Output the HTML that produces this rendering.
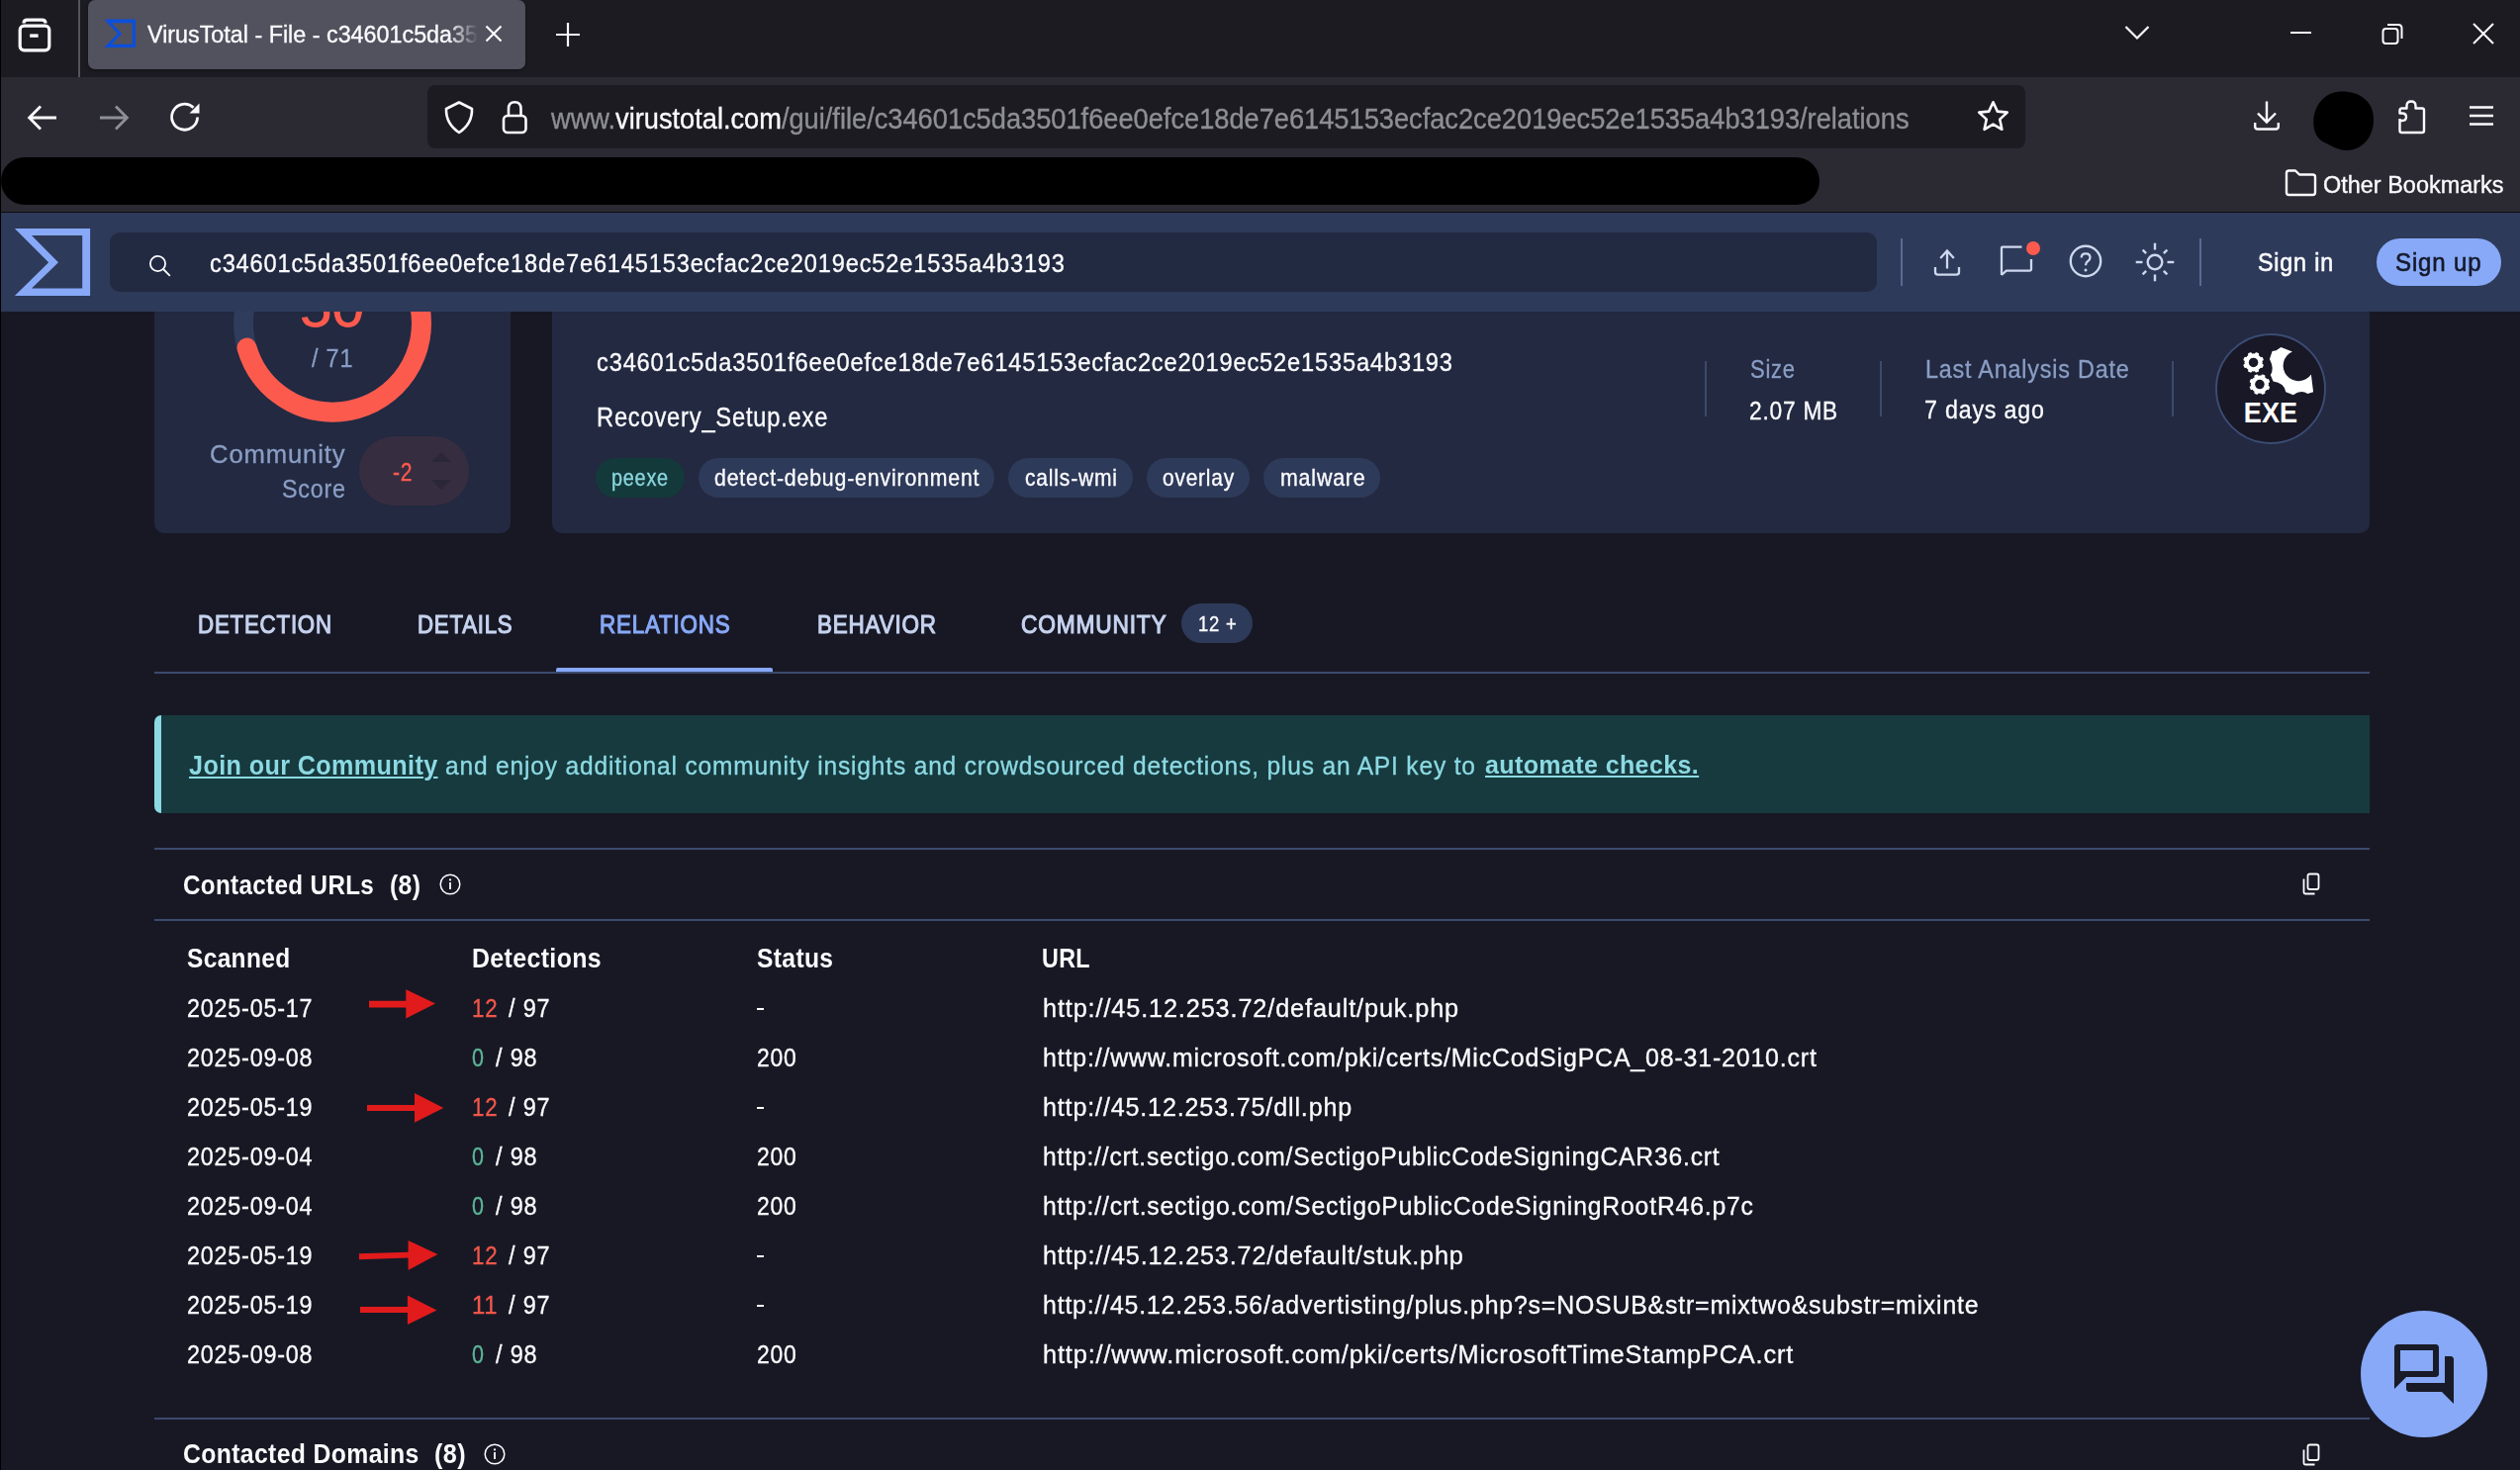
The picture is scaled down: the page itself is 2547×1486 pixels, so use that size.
<!DOCTYPE html>
<html><head><meta charset="utf-8"><title>VirusTotal</title>
<style>
html,body{margin:0;padding:0;width:2547px;height:1486px;overflow:hidden;background:#181825;}
body{position:relative;font-family:"Liberation Sans",sans-serif;}
.t{position:absolute;white-space:pre;transform-origin:0 0;color:#fff;-webkit-text-stroke-color:currentColor;}
.r{position:absolute;display:block;}
</style></head><body>
<div class="r" style="left:0.00px;top:0.00px;width:2547.00px;height:78.00px;background:#1c1b22;border-radius:0px;"></div>
<div class="r" style="left:0.00px;top:78.00px;width:2547.00px;height:136.00px;background:#2b2a33;border-radius:0px;"></div>
<div class="r" style="left:0.00px;top:214.00px;width:2547.00px;height:1.00px;background:#0c0c0e;border-radius:0px;"></div>
<div class="r" style="left:0.00px;top:0.00px;width:1.00px;height:1486.00px;background:#000;border-radius:0px;"></div>
<svg class="r" style="left:17.00px;top:17.00px;" width="36" height="36" viewBox="0 0 36 36"><rect x="3.2" y="9.2" width="29.6" height="24.6" rx="4" fill="none" stroke="#fbfbfe" stroke-width="3.2"/><path d="M7 6.5 Q7 3.2 10.5 3.2 H25.5 Q29 3.2 29 6.5" fill="none" stroke="#fbfbfe" stroke-width="3.2"/><rect x="13.2" y="17.4" width="8.4" height="3.4" fill="#fbfbfe"/></svg>
<div class="r" style="left:79.00px;top:0.00px;width:2.00px;height:78.00px;background:#55545e;border-radius:0px;"></div>
<div class="r" style="left:89.00px;top:0.00px;width:442.00px;height:70.00px;background:#52515e;border-radius:7px;box-shadow:0 1px 3px rgba(0,0,0,0.45)"></div>
<svg class="r" style="left:0.00px;top:0.00px;" width="150" height="60" viewBox="0 0 150 60"><path d="M105.3 19.6 H137 V48.05 H105.3 L119 34 Z M112.8 23.2 H133.7 V44.65 H112.8 L123.1 34 Z" fill="#0b4fdc" fill-rule="evenodd"/></svg>
<svg class="r" style="left:489.00px;top:24.00px;" width="20" height="20" viewBox="0 0 20 20"><path d="M2.5 2.5 L17.5 17.5 M17.5 2.5 L2.5 17.5" stroke="#fbfbfe" stroke-width="2.2"/></svg>
<svg class="r" style="left:560.00px;top:21.00px;" width="28" height="28" viewBox="0 0 28 28"><path d="M14 2 V26 M2 14 H26" stroke="#fbfbfe" stroke-width="2.2"/></svg>
<svg class="r" style="left:2146.00px;top:24.00px;" width="28" height="19" viewBox="0 0 28 19"><path d="M2.5 3 L14 14.5 L25.5 3" fill="none" stroke="#fbfbfe" stroke-width="2.2"/></svg>
<div class="r" style="left:2315.00px;top:32.00px;width:21.00px;height:2.00px;background:#fbfbfe;border-radius:0px;"></div>
<svg class="r" style="left:2405.00px;top:21.00px;" width="26" height="26" viewBox="0 0 26 26"><rect x="3.5" y="8" width="15" height="15" rx="3" fill="none" stroke="#fbfbfe" stroke-width="2"/><path d="M8 4 H19 Q22.5 4 22.5 7.5 V18" fill="none" stroke="#fbfbfe" stroke-width="2"/></svg>
<svg class="r" style="left:2498.00px;top:22.00px;" width="24" height="24" viewBox="0 0 24 24"><path d="M2 2 L22 22 M22 2 L2 22" stroke="#fbfbfe" stroke-width="2"/></svg>
<svg class="r" style="left:26.00px;top:104.00px;" width="34" height="30" viewBox="0 0 34 30"><path d="M31 15 H4 M15 3.5 L3.6 15 L15 26.5" fill="none" stroke="#fbfbfe" stroke-width="2.8"/></svg>
<svg class="r" style="left:98.00px;top:104.00px;" width="34" height="30" viewBox="0 0 34 30"><path d="M3 15 H30 M19 3.5 L30.4 15 L19 26.5" fill="none" stroke="#8f8f98" stroke-width="2.8"/></svg>
<svg class="r" style="left:170.00px;top:101.00px;" width="34" height="34" viewBox="0 0 34 34"><path d="M29.6 17.5 A13 13 0 1 1 25.5 7.7" fill="none" stroke="#fbfbfe" stroke-width="2.8"/><path d="M31.5 3.5 V13.5 H21.5 Z" fill="#fbfbfe"/></svg>
<div class="r" style="left:432.00px;top:86.00px;width:1615.00px;height:64.00px;background:#1c1b22;border-radius:8px;"></div>
<svg class="r" style="left:446.00px;top:100.00px;" width="36" height="37" viewBox="0 0 36 37"><path d="M18 3.5 L31 10 Q31.5 25 18 34 Q4.5 25 5 10 Z" fill="none" stroke="#fbfbfe" stroke-width="2.6" stroke-linejoin="round"/></svg>
<svg class="r" style="left:505.00px;top:100.00px;" width="30" height="37" viewBox="0 0 30 37"><rect x="4" y="17" width="22.5" height="17" rx="4" fill="none" stroke="#fbfbfe" stroke-width="2.6"/><path d="M9 17 V10 Q9 3.3 15.25 3.3 Q21.5 3.3 21.5 10 V17" fill="none" stroke="#fbfbfe" stroke-width="2.6"/></svg>
<svg class="r" style="left:1996.00px;top:100.00px;" width="37" height="36" viewBox="0 0 37 36"><path d="M18.5 3.3 L22.8 12.6 L32.8 13.6 L25.2 20.6 L27.4 30.8 L18.5 25.6 L9.6 30.8 L11.8 20.6 L4.2 13.6 L14.2 12.6 Z" fill="none" stroke="#fbfbfe" stroke-width="2.6" stroke-linejoin="round"/></svg>
<svg class="r" style="left:2275.00px;top:100.00px;" width="32" height="34" viewBox="0 0 32 34"><path d="M16 2.5 V23 M7 14.5 L16 23.5 L25 14.5" fill="none" stroke="#fbfbfe" stroke-width="2.4"/><path d="M4.2 24 V28 Q4.2 30.5 7 30.5 H25 Q27.8 30.5 27.8 28 V24" fill="none" stroke="#fbfbfe" stroke-width="2.4"/></svg>
<svg class="r" style="left:2336.00px;top:90.00px;" width="66" height="65" viewBox="0 0 66 65"><path d="M30 2.5 C48 2 63 12 63 30 C63.5 50 50 62.5 35 62 C26 61.5 20 57 12 53.5 C4 49 2 40 2.3 32 C3 16 14 3 30 2.5 Z" fill="#000"/></svg>
<svg class="r" style="left:2421.00px;top:99.00px;" width="33" height="38" viewBox="0 0 33 38"><path d="M4.5 21 V33 Q4.5 35 6.5 35 H27 Q29 35 29 33 V12.5 Q29 10.5 27 10.5 H20.5 V8 Q20.5 3.5 16 3.5 Q11.5 3.5 11.5 8 V10.5 H6.5 Q4.5 10.5 4.5 12.5 V15.5 H7 Q11 15.5 11 19.3 Q11 23 7 23 H4.5" fill="none" stroke="#fbfbfe" stroke-width="2.4" stroke-linejoin="round"/></svg>
<svg class="r" style="left:2494.00px;top:105.00px;" width="28" height="24" viewBox="0 0 28 24"><path d="M2 3.5 H26 M2 12 H26 M2 20.5 H26" stroke="#fbfbfe" stroke-width="2.4"/></svg>
<div class="r" style="left:1.00px;top:159.00px;width:1838.00px;height:48.00px;background:#000;border-radius:24px;"></div>
<svg class="r" style="left:2307.00px;top:169.00px;" width="36" height="31" viewBox="0 0 36 31"><path d="M4 6 Q4 3.5 6.5 3.5 H13 L17 7.5 H30.5 Q33 7.5 33 10 V25.5 Q33 28 30.5 28 H6.5 Q4 28 4 25.5 Z" fill="none" stroke="#fbfbfe" stroke-width="2.4" stroke-linejoin="round"/></svg>
<div class="t" style="left:148.55px;top:22.89px;font-size:24.58px;line-height:24.58px;font-weight:400;transform:scaleX(0.9487);-webkit-text-stroke-width:0.35px;color:#fbfbfe;-webkit-mask-image:linear-gradient(90deg,#000 0,#000 91%,transparent 100%)">VirusTotal - File - c34601c5da35</div>
<div class="t" style="left:556.74px;top:106.01px;font-size:28.57px;line-height:28.57px;font-weight:400;transform:scaleX(0.9529);-webkit-text-stroke-width:0.35px;"><span style="color:#8e8e95">www.</span><span style="color:#fbfbfe">virustotal.com</span><span style="color:#8e8e95">/gui/file/c34601c5da3501f6ee0efce18de7e6145153ecfac2ce2019ec52e1535a4b3193/relations</span></div>
<div class="t" style="left:2348.24px;top:175.77px;font-size:23.42px;line-height:23.42px;font-weight:400;transform:scaleX(1.0023);-webkit-text-stroke-width:0.35px;color:#fbfbfe">Other Bookmarks</div>
<div class="r" style="left:1.00px;top:315.00px;width:2546.00px;height:1171.00px;background:#181825;border-radius:0px;"></div>
<div class="r" style="left:156.00px;top:315.00px;width:360.00px;height:224.00px;background:#222940;border-radius:0 0 10px 10px;"></div>
<svg class="r" style="left:226.00px;top:216.00px;" width="220" height="220" viewBox="0 0 220 220"><circle cx="110" cy="110.7" r="90" fill="none" stroke="#2f3c5c" stroke-width="20"/><circle cx="110" cy="110.7" r="90" fill="none" stroke="#fd5a4e" stroke-width="20" stroke-linecap="round" stroke-dasharray="398.10 1000" transform="rotate(-90 110 110.7)"/></svg>
<div class="t" style="left:302.56px;top:284.34px;font-size:55.70px;line-height:55.70px;font-weight:400;transform:scaleX(1.0465);color:#fd5a4e;-webkit-text-stroke-width:0.80px;">50</div>
<div class="t" style="left:315.25px;top:350.27px;font-size:25.66px;line-height:25.66px;font-weight:400;transform:scaleX(0.9103);color:#8a9dc4;-webkit-text-stroke-width:0.35px;letter-spacing:0.90px;">/ 71</div>
<div class="t" style="left:212.25px;top:446.47px;font-size:26.61px;line-height:26.61px;font-weight:400;transform:scaleX(0.9634);color:#8a9dc4;-webkit-text-stroke-width:0.35px;letter-spacing:0.90px;">Community</div>
<div class="t" style="left:284.75px;top:481.47px;font-size:26.61px;line-height:26.61px;font-weight:400;transform:scaleX(0.8756);color:#8a9dc4;-webkit-text-stroke-width:0.35px;letter-spacing:0.90px;">Score</div>
<div class="r" style="left:363.00px;top:441.00px;width:111.00px;height:70.00px;background:#372d41;border-radius:35px;"></div>
<div class="t" style="left:397.25px;top:464.76px;font-size:25.09px;line-height:25.09px;font-weight:400;transform:scaleX(0.8409);color:#fd5a4e;-webkit-text-stroke-width:0.35px;letter-spacing:0.90px;">-2</div>
<svg class="r" style="left:434.00px;top:455.00px;" width="24" height="42" viewBox="0 0 24 42"><path d="M2 12 L12 2 L22 12 Z M2 30 L12 40 L22 30 Z" fill="#2b2639"/></svg>
<div class="r" style="left:558.00px;top:315.00px;width:1837.00px;height:224.00px;background:#222940;border-radius:0 0 10px 10px;"></div>
<div class="t" style="left:603.25px;top:354.02px;font-size:25.37px;line-height:25.37px;font-weight:400;transform:scaleX(0.9319);-webkit-text-stroke-width:0.35px;letter-spacing:0.90px;color:#fbfbfe">c34601c5da3501f6ee0efce18de7e6145153ecfac2ce2019ec52e1535a4b3193</div>
<div class="t" style="left:603.25px;top:408.33px;font-size:27.49px;line-height:27.49px;font-weight:400;transform:scaleX(0.8629);-webkit-text-stroke-width:0.35px;letter-spacing:0.90px;color:#fbfbfe">Recovery_Setup.exe</div>
<div class="r" style="left:602.00px;top:463.00px;width:90.00px;height:40.00px;background:#14393b;border-radius:20px;"></div>
<div class="t" style="left:618.25px;top:472.39px;font-size:23.05px;line-height:23.05px;font-weight:400;transform:scaleX(0.8599);color:#8ad6de;-webkit-text-stroke-width:0.35px;letter-spacing:0.90px;">peexe</div>
<div class="r" style="left:706.00px;top:463.00px;width:299.00px;height:40.00px;background:#2e3a59;border-radius:20px;"></div>
<div class="t" style="left:721.75px;top:472.39px;font-size:23.05px;line-height:23.05px;font-weight:400;transform:scaleX(0.9233);color:#fbfbfe;-webkit-text-stroke-width:0.35px;letter-spacing:0.90px;">detect-debug-environment</div>
<div class="r" style="left:1019.30px;top:463.00px;width:125.70px;height:40.00px;background:#2e3a59;border-radius:20px;"></div>
<div class="t" style="left:1035.74px;top:472.39px;font-size:23.05px;line-height:23.05px;font-weight:400;transform:scaleX(0.9126);color:#fbfbfe;-webkit-text-stroke-width:0.35px;letter-spacing:0.90px;">calls-wmi</div>
<div class="r" style="left:1159.00px;top:463.00px;width:104.00px;height:40.00px;background:#2e3a59;border-radius:20px;"></div>
<div class="t" style="left:1175.24px;top:472.39px;font-size:23.05px;line-height:23.05px;font-weight:400;transform:scaleX(0.9058);color:#fbfbfe;-webkit-text-stroke-width:0.35px;letter-spacing:0.90px;">overlay</div>
<div class="r" style="left:1277.00px;top:463.00px;width:118.00px;height:40.00px;background:#2e3a59;border-radius:20px;"></div>
<div class="t" style="left:1294.24px;top:472.39px;font-size:23.05px;line-height:23.05px;font-weight:400;transform:scaleX(0.9264);color:#fbfbfe;-webkit-text-stroke-width:0.35px;letter-spacing:0.90px;">malware</div>
<div class="r" style="left:1723.00px;top:365.00px;width:2.00px;height:56.00px;background:#3c4a6c;border-radius:0px;"></div>
<div class="r" style="left:1900.00px;top:365.00px;width:2.00px;height:56.00px;background:#3c4a6c;border-radius:0px;"></div>
<div class="r" style="left:2195.00px;top:365.00px;width:2.00px;height:56.00px;background:#3c4a6c;border-radius:0px;"></div>
<div class="t" style="left:1768.74px;top:359.71px;font-size:26.32px;line-height:26.32px;font-weight:400;transform:scaleX(0.8351);color:#8a9dc4;-webkit-text-stroke-width:0.35px;letter-spacing:0.90px;">Size</div>
<div class="t" style="left:1768.24px;top:401.79px;font-size:26.23px;line-height:26.23px;font-weight:400;transform:scaleX(0.8661);-webkit-text-stroke-width:0.35px;letter-spacing:0.90px;color:#fbfbfe">2.07 MB</div>
<div class="t" style="left:1946.24px;top:359.71px;font-size:26.32px;line-height:26.32px;font-weight:400;transform:scaleX(0.8878);color:#8a9dc4;-webkit-text-stroke-width:0.35px;letter-spacing:0.90px;">Last Analysis Date</div>
<div class="t" style="left:1945.24px;top:401.98px;font-size:25.89px;line-height:25.89px;font-weight:400;transform:scaleX(0.8970);-webkit-text-stroke-width:0.35px;letter-spacing:0.90px;color:#fbfbfe">7 days ago</div>
<svg class="r" style="left:2239.00px;top:337.00px;" width="112" height="112" viewBox="0 0 112 112"><circle cx="56" cy="56" r="55" fill="#181826" stroke="#3b4b73" stroke-width="2"/><g transform="translate(38.6 29.4)"><circle r="9.1" fill="#fff"/><rect x="-2" y="-10.5" width="4" height="3" rx="1" fill="#fff" transform="rotate(22.5)"/><rect x="-2" y="-10.5" width="4" height="3" rx="1" fill="#fff" transform="rotate(67.5)"/><rect x="-2" y="-10.5" width="4" height="3" rx="1" fill="#fff" transform="rotate(112.5)"/><rect x="-2" y="-10.5" width="4" height="3" rx="1" fill="#fff" transform="rotate(157.5)"/><rect x="-2" y="-10.5" width="4" height="3" rx="1" fill="#fff" transform="rotate(202.5)"/><rect x="-2" y="-10.5" width="4" height="3" rx="1" fill="#fff" transform="rotate(247.5)"/><rect x="-2" y="-10.5" width="4" height="3" rx="1" fill="#fff" transform="rotate(292.5)"/><rect x="-2" y="-10.5" width="4" height="3" rx="1" fill="#fff" transform="rotate(337.5)"/><circle r="4.75" fill="#181826"/></g><g transform="translate(44.9 51.6)"><circle r="9.1" fill="#fff"/><rect x="-2" y="-10.5" width="4" height="3" rx="1" fill="#fff" transform="rotate(22.5)"/><rect x="-2" y="-10.5" width="4" height="3" rx="1" fill="#fff" transform="rotate(67.5)"/><rect x="-2" y="-10.5" width="4" height="3" rx="1" fill="#fff" transform="rotate(112.5)"/><rect x="-2" y="-10.5" width="4" height="3" rx="1" fill="#fff" transform="rotate(157.5)"/><rect x="-2" y="-10.5" width="4" height="3" rx="1" fill="#fff" transform="rotate(202.5)"/><rect x="-2" y="-10.5" width="4" height="3" rx="1" fill="#fff" transform="rotate(247.5)"/><rect x="-2" y="-10.5" width="4" height="3" rx="1" fill="#fff" transform="rotate(292.5)"/><rect x="-2" y="-10.5" width="4" height="3" rx="1" fill="#fff" transform="rotate(337.5)"/><circle r="4.75" fill="#181826"/></g><path d="M61.6 17.2 L66.4 14.1 L77.9 18.5 A15.5 15.5 0 1 0 96.9 41.5 L99.1 59.2 L93.4 60.9 Q86.5 56.5 78.8 62.3 L71.3 59.2 Q69.5 50 58.5 48.6 L55.8 41.9 Q60 36 54.9 26 L57.6 18 Z" fill="#fff"/><text x="56" y="89.6" text-anchor="middle" font-family="Liberation Sans" font-weight="700" font-size="29.5" fill="#fff" transform="translate(56 0) scale(0.92 1) translate(-56 0)">EXE</text></svg>
<div class="r" style="left:156.00px;top:679.00px;width:2239.00px;height:2.00px;background:#3c4a6c;border-radius:0px;"></div>
<div class="r" style="left:561.50px;top:675.00px;width:219.00px;height:4.00px;background:#87a9f8;border-radius:2px 2px 0 0;"></div>
<div class="t" style="left:199.77px;top:618.51px;font-size:25.38px;line-height:25.38px;font-weight:400;transform:scaleX(0.8783);color:#c6d3ef;-webkit-text-stroke-width:1.10px;letter-spacing:0.90px;">DETECTION</div>
<div class="t" style="left:422.47px;top:618.51px;font-size:25.38px;line-height:25.38px;font-weight:400;transform:scaleX(0.8753);color:#c6d3ef;-webkit-text-stroke-width:1.10px;letter-spacing:0.90px;">DETAILS</div>
<div class="t" style="left:605.77px;top:618.51px;font-size:25.38px;line-height:25.38px;font-weight:400;transform:scaleX(0.8825);color:#87a9f8;-webkit-text-stroke-width:1.10px;letter-spacing:0.90px;">RELATIONS</div>
<div class="t" style="left:825.77px;top:618.51px;font-size:25.38px;line-height:25.38px;font-weight:400;transform:scaleX(0.8855);color:#c6d3ef;-webkit-text-stroke-width:1.10px;letter-spacing:0.90px;">BEHAVIOR</div>
<div class="t" style="left:1032.47px;top:618.51px;font-size:25.38px;line-height:25.38px;font-weight:400;transform:scaleX(0.8960);color:#c6d3ef;-webkit-text-stroke-width:1.10px;letter-spacing:0.90px;">COMMUNITY</div>
<div class="r" style="left:1194.00px;top:610.00px;width:72.00px;height:40.00px;background:#2e3a59;border-radius:20px;"></div>
<div class="t" style="left:1211.04px;top:620.19px;font-size:22.22px;line-height:22.22px;font-weight:400;transform:scaleX(0.8325);-webkit-text-stroke-width:0.35px;letter-spacing:0.90px;color:#fbfbfe">12 +</div>
<div class="r" style="left:156.00px;top:723.00px;width:2239.00px;height:99.00px;background:#163a3e;border-radius:7px 0 0 7px;"></div>
<div class="r" style="left:156.00px;top:723.00px;width:7.00px;height:99.00px;background:#8cd9e3;border-radius:7px 0 0 7px;"></div>
<div class="t" style="left:191.40px;top:759.99px;font-size:27.18px;line-height:27.18px;font-weight:700;transform:scaleX(0.9270);color:#8cd9e3;-webkit-text-stroke-width:0.00px;letter-spacing:0.40px;text-decoration:underline;text-decoration-thickness:1.5px;text-underline-offset:2px">Join our Community</div>
<div class="t" style="left:450.25px;top:760.59px;font-size:26.47px;line-height:26.47px;font-weight:400;transform:scaleX(0.9265);color:#8cd9e3;-webkit-text-stroke-width:0.35px;letter-spacing:0.90px;">and enjoy additional community insights and crowdsourced detections, plus an API key to</div>
<div class="t" style="left:1500.80px;top:761.16px;font-size:25.79px;line-height:25.79px;font-weight:700;transform:scaleX(0.9703);color:#8cd9e3;-webkit-text-stroke-width:0.00px;letter-spacing:0.40px;text-decoration:underline;text-decoration-thickness:1.5px;text-underline-offset:2px">automate checks.</div>
<div class="r" style="left:156.00px;top:857.00px;width:2239.00px;height:2.00px;background:#3c4a6c;border-radius:0px;"></div>
<div class="t" style="left:185.00px;top:880.64px;font-size:27.47px;line-height:27.47px;font-weight:700;transform:scaleX(0.8809);-webkit-text-stroke-width:0.00px;letter-spacing:0.40px;color:#fbfbfe">Contacted URLs</div>
<div class="t" style="left:394.00px;top:880.64px;font-size:27.47px;line-height:27.47px;font-weight:700;transform:scaleX(0.9012);-webkit-text-stroke-width:0.00px;letter-spacing:0.40px;color:#fbfbfe">(8)</div>
<svg class="r" style="left:443.00px;top:882.00px;" width="24" height="24" viewBox="0 0 24 24"><circle cx="12" cy="12" r="9.8" fill="none" stroke="#fbfbfe" stroke-width="1.5"/><rect x="11.1" y="10" width="1.8" height="7" fill="#fbfbfe"/><circle cx="12" cy="7.4" r="1.1" fill="#fbfbfe"/></svg>
<svg class="r" style="left:2325.50px;top:882.00px;" width="22" height="24" viewBox="0 0 22 24"><path d="M6.5 3.5 Q6.5 1.5 8.5 1.5 H15.5 Q17.5 1.5 17.5 3.5 V15 Q17.5 17 15.5 17 H8.5 Q6.5 17 6.5 15 Z" fill="none" stroke="#fbfbfe" stroke-width="1.8"/><path d="M2.5 6.5 V20 Q2.5 21.5 4 21.5 H13.5" fill="none" stroke="#fbfbfe" stroke-width="1.8"/></svg>
<div class="r" style="left:156.00px;top:929.00px;width:2239.00px;height:2.00px;background:#3c4a6c;border-radius:0px;"></div>
<div class="t" style="left:189.00px;top:954.86px;font-size:27.33px;line-height:27.33px;font-weight:700;transform:scaleX(0.8950);-webkit-text-stroke-width:0.00px;letter-spacing:0.40px;color:#fbfbfe">Scanned</div>
<div class="t" style="left:477.00px;top:954.86px;font-size:27.33px;line-height:27.33px;font-weight:700;transform:scaleX(0.9120);-webkit-text-stroke-width:0.00px;letter-spacing:0.40px;color:#fbfbfe">Detections</div>
<div class="t" style="left:764.80px;top:954.86px;font-size:27.33px;line-height:27.33px;font-weight:700;transform:scaleX(0.9005);-webkit-text-stroke-width:0.00px;letter-spacing:0.40px;color:#fbfbfe">Status</div>
<div class="t" style="left:1053.30px;top:954.86px;font-size:27.33px;line-height:27.33px;font-weight:700;transform:scaleX(0.8524);-webkit-text-stroke-width:0.00px;letter-spacing:0.40px;color:#fbfbfe">URL</div>
<div class="t" style="left:189.25px;top:1005.55px;font-size:26.52px;line-height:26.52px;font-weight:400;transform:scaleX(0.8804);-webkit-text-stroke-width:0.35px;letter-spacing:0.90px;color:#fbfbfe">2025-05-17</div>
<div class="t" style="left:477.25px;top:1005.55px;font-size:26.52px;line-height:26.52px;font-weight:400;transform:scaleX(0.8391);color:#f0574a;-webkit-text-stroke-width:0.35px;letter-spacing:0.90px;">12</div>
<div class="t" style="left:514.25px;top:1005.55px;font-size:26.52px;line-height:26.52px;font-weight:400;transform:scaleX(0.8851);color:#fbfbfe;-webkit-text-stroke-width:0.35px;letter-spacing:0.90px;">/ 97</div>
<div class="r" style="left:765.00px;top:1018.50px;width:7.00px;height:2.00px;background:#fbfbfe;border-radius:0px;"></div>
<div class="t" style="left:1053.54px;top:1005.57px;font-size:26.50px;line-height:26.50px;font-weight:400;transform:scaleX(0.9544);-webkit-text-stroke-width:0.35px;letter-spacing:0.90px;color:#fbfbfe">http://45.12.253.72/default/puk.php</div>
<div class="t" style="left:189.25px;top:1055.55px;font-size:26.52px;line-height:26.52px;font-weight:400;transform:scaleX(0.8804);-webkit-text-stroke-width:0.35px;letter-spacing:0.90px;color:#fbfbfe">2025-09-08</div>
<div class="t" style="left:477.25px;top:1055.55px;font-size:26.52px;line-height:26.52px;font-weight:400;transform:scaleX(0.8102);color:#5bb596;-webkit-text-stroke-width:0.35px;letter-spacing:0.90px;">0</div>
<div class="t" style="left:500.75px;top:1055.55px;font-size:26.52px;line-height:26.52px;font-weight:400;transform:scaleX(0.8851);color:#fbfbfe;-webkit-text-stroke-width:0.35px;letter-spacing:0.90px;">/ 98</div>
<div class="t" style="left:765.04px;top:1055.55px;font-size:26.52px;line-height:26.52px;font-weight:400;transform:scaleX(0.8633);-webkit-text-stroke-width:0.35px;letter-spacing:0.90px;color:#fbfbfe">200</div>
<div class="t" style="left:1053.54px;top:1055.57px;font-size:26.50px;line-height:26.50px;font-weight:400;transform:scaleX(0.9392);-webkit-text-stroke-width:0.35px;letter-spacing:0.90px;color:#fbfbfe">http://www.microsoft.com/pki/certs/MicCodSigPCA_08-31-2010.crt</div>
<div class="t" style="left:189.25px;top:1105.55px;font-size:26.52px;line-height:26.52px;font-weight:400;transform:scaleX(0.8804);-webkit-text-stroke-width:0.35px;letter-spacing:0.90px;color:#fbfbfe">2025-05-19</div>
<div class="t" style="left:477.25px;top:1105.55px;font-size:26.52px;line-height:26.52px;font-weight:400;transform:scaleX(0.8391);color:#f0574a;-webkit-text-stroke-width:0.35px;letter-spacing:0.90px;">12</div>
<div class="t" style="left:514.25px;top:1105.55px;font-size:26.52px;line-height:26.52px;font-weight:400;transform:scaleX(0.8851);color:#fbfbfe;-webkit-text-stroke-width:0.35px;letter-spacing:0.90px;">/ 97</div>
<div class="r" style="left:765.00px;top:1118.50px;width:7.00px;height:2.00px;background:#fbfbfe;border-radius:0px;"></div>
<div class="t" style="left:1053.54px;top:1105.57px;font-size:26.50px;line-height:26.50px;font-weight:400;transform:scaleX(0.9464);-webkit-text-stroke-width:0.35px;letter-spacing:0.90px;color:#fbfbfe">http://45.12.253.75/dll.php</div>
<div class="t" style="left:189.25px;top:1155.55px;font-size:26.52px;line-height:26.52px;font-weight:400;transform:scaleX(0.8804);-webkit-text-stroke-width:0.35px;letter-spacing:0.90px;color:#fbfbfe">2025-09-04</div>
<div class="t" style="left:477.25px;top:1155.55px;font-size:26.52px;line-height:26.52px;font-weight:400;transform:scaleX(0.8102);color:#5bb596;-webkit-text-stroke-width:0.35px;letter-spacing:0.90px;">0</div>
<div class="t" style="left:500.75px;top:1155.55px;font-size:26.52px;line-height:26.52px;font-weight:400;transform:scaleX(0.8851);color:#fbfbfe;-webkit-text-stroke-width:0.35px;letter-spacing:0.90px;">/ 98</div>
<div class="t" style="left:765.04px;top:1155.55px;font-size:26.52px;line-height:26.52px;font-weight:400;transform:scaleX(0.8633);-webkit-text-stroke-width:0.35px;letter-spacing:0.90px;color:#fbfbfe">200</div>
<div class="t" style="left:1053.54px;top:1155.57px;font-size:26.50px;line-height:26.50px;font-weight:400;transform:scaleX(0.9291);-webkit-text-stroke-width:0.35px;letter-spacing:0.90px;color:#fbfbfe">http://crt.sectigo.com/SectigoPublicCodeSigningCAR36.crt</div>
<div class="t" style="left:189.25px;top:1205.55px;font-size:26.52px;line-height:26.52px;font-weight:400;transform:scaleX(0.8804);-webkit-text-stroke-width:0.35px;letter-spacing:0.90px;color:#fbfbfe">2025-09-04</div>
<div class="t" style="left:477.25px;top:1205.55px;font-size:26.52px;line-height:26.52px;font-weight:400;transform:scaleX(0.8102);color:#5bb596;-webkit-text-stroke-width:0.35px;letter-spacing:0.90px;">0</div>
<div class="t" style="left:500.75px;top:1205.55px;font-size:26.52px;line-height:26.52px;font-weight:400;transform:scaleX(0.8851);color:#fbfbfe;-webkit-text-stroke-width:0.35px;letter-spacing:0.90px;">/ 98</div>
<div class="t" style="left:765.04px;top:1205.55px;font-size:26.52px;line-height:26.52px;font-weight:400;transform:scaleX(0.8633);-webkit-text-stroke-width:0.35px;letter-spacing:0.90px;color:#fbfbfe">200</div>
<div class="t" style="left:1053.54px;top:1205.57px;font-size:26.50px;line-height:26.50px;font-weight:400;transform:scaleX(0.9322);-webkit-text-stroke-width:0.35px;letter-spacing:0.90px;color:#fbfbfe">http://crt.sectigo.com/SectigoPublicCodeSigningRootR46.p7c</div>
<div class="t" style="left:189.25px;top:1255.55px;font-size:26.52px;line-height:26.52px;font-weight:400;transform:scaleX(0.8804);-webkit-text-stroke-width:0.35px;letter-spacing:0.90px;color:#fbfbfe">2025-05-19</div>
<div class="t" style="left:477.25px;top:1255.55px;font-size:26.52px;line-height:26.52px;font-weight:400;transform:scaleX(0.8391);color:#f0574a;-webkit-text-stroke-width:0.35px;letter-spacing:0.90px;">12</div>
<div class="t" style="left:514.25px;top:1255.55px;font-size:26.52px;line-height:26.52px;font-weight:400;transform:scaleX(0.8851);color:#fbfbfe;-webkit-text-stroke-width:0.35px;letter-spacing:0.90px;">/ 97</div>
<div class="r" style="left:765.00px;top:1268.50px;width:7.00px;height:2.00px;background:#fbfbfe;border-radius:0px;"></div>
<div class="t" style="left:1053.54px;top:1255.57px;font-size:26.50px;line-height:26.50px;font-weight:400;transform:scaleX(0.9504);-webkit-text-stroke-width:0.35px;letter-spacing:0.90px;color:#fbfbfe">http://45.12.253.72/default/stuk.php</div>
<div class="t" style="left:189.25px;top:1305.55px;font-size:26.52px;line-height:26.52px;font-weight:400;transform:scaleX(0.8804);-webkit-text-stroke-width:0.35px;letter-spacing:0.90px;color:#fbfbfe">2025-05-19</div>
<div class="t" style="left:477.25px;top:1305.55px;font-size:26.52px;line-height:26.52px;font-weight:400;transform:scaleX(0.8982);color:#f0574a;-webkit-text-stroke-width:0.35px;letter-spacing:0.90px;">11</div>
<div class="t" style="left:514.25px;top:1305.55px;font-size:26.52px;line-height:26.52px;font-weight:400;transform:scaleX(0.8851);color:#fbfbfe;-webkit-text-stroke-width:0.35px;letter-spacing:0.90px;">/ 97</div>
<div class="r" style="left:765.00px;top:1318.50px;width:7.00px;height:2.00px;background:#fbfbfe;border-radius:0px;"></div>
<div class="t" style="left:1053.54px;top:1305.57px;font-size:26.50px;line-height:26.50px;font-weight:400;transform:scaleX(0.9362);-webkit-text-stroke-width:0.35px;letter-spacing:0.90px;color:#fbfbfe">http://45.12.253.56/advertisting/plus.php?s=NOSUB&amp;str=mixtwo&amp;substr=mixinte</div>
<div class="t" style="left:189.25px;top:1355.55px;font-size:26.52px;line-height:26.52px;font-weight:400;transform:scaleX(0.8804);-webkit-text-stroke-width:0.35px;letter-spacing:0.90px;color:#fbfbfe">2025-09-08</div>
<div class="t" style="left:477.25px;top:1355.55px;font-size:26.52px;line-height:26.52px;font-weight:400;transform:scaleX(0.8102);color:#5bb596;-webkit-text-stroke-width:0.35px;letter-spacing:0.90px;">0</div>
<div class="t" style="left:500.75px;top:1355.55px;font-size:26.52px;line-height:26.52px;font-weight:400;transform:scaleX(0.8851);color:#fbfbfe;-webkit-text-stroke-width:0.35px;letter-spacing:0.90px;">/ 98</div>
<div class="t" style="left:765.04px;top:1355.55px;font-size:26.52px;line-height:26.52px;font-weight:400;transform:scaleX(0.8633);-webkit-text-stroke-width:0.35px;letter-spacing:0.90px;color:#fbfbfe">200</div>
<div class="t" style="left:1053.54px;top:1355.57px;font-size:26.50px;line-height:26.50px;font-weight:400;transform:scaleX(0.9546);-webkit-text-stroke-width:0.35px;letter-spacing:0.90px;color:#fbfbfe">http://www.microsoft.com/pki/certs/MicrosoftTimeStampPCA.crt</div>
<svg class="r" style="left:0.00px;top:0.00px;" width="2547" height="1486" viewBox="0 0 2547 1486"><path d="M373.0 1011.8 L410.3 1011.8 L410.3 1000.3 L440.0 1014.5 L410.3 1029.4 L410.3 1018.6 L373.0 1018.6 Z" fill="#e11b1b"/><path d="M371.0 1116.9 L419.0 1116.9 L419.0 1105.0 L448.3 1119.9 L419.0 1134.8 L419.0 1123.0 L371.0 1123.0 Z" fill="#e11b1b"/><path d="M362.9 1267.2 L412.6 1265.7 L412.6 1254.0 L442.5 1267.9 L412.6 1283.9 L412.6 1271.6 L362.9 1273.2 Z" fill="#e11b1b"/><path d="M364.0 1321.0 L411.9 1321.0 L411.9 1309.4 L441.5 1324.4 L411.9 1339.0 L411.9 1327.0 L364.0 1327.0 Z" fill="#e11b1b"/></svg>
<div class="r" style="left:156.00px;top:1433.00px;width:2239.00px;height:2.00px;background:#3c4a6c;border-radius:0px;"></div>
<div class="t" style="left:184.80px;top:1456.71px;font-size:27.03px;line-height:27.03px;font-weight:700;transform:scaleX(0.9165);-webkit-text-stroke-width:0.00px;letter-spacing:0.40px;color:#fbfbfe">Contacted Domains</div>
<div class="t" style="left:439.00px;top:1456.71px;font-size:27.03px;line-height:27.03px;font-weight:700;transform:scaleX(0.9320);-webkit-text-stroke-width:0.00px;letter-spacing:0.40px;color:#fbfbfe">(8)</div>
<svg class="r" style="left:488.00px;top:1458.00px;" width="24" height="24" viewBox="0 0 24 24"><circle cx="12" cy="12" r="9.8" fill="none" stroke="#fbfbfe" stroke-width="1.5"/><rect x="11.1" y="10" width="1.8" height="7" fill="#fbfbfe"/><circle cx="12" cy="7.4" r="1.1" fill="#fbfbfe"/></svg>
<svg class="r" style="left:2325.50px;top:1458.50px;" width="22" height="24" viewBox="0 0 22 24"><path d="M6.5 3.5 Q6.5 1.5 8.5 1.5 H15.5 Q17.5 1.5 17.5 3.5 V15 Q17.5 17 15.5 17 H8.5 Q6.5 17 6.5 15 Z" fill="none" stroke="#fbfbfe" stroke-width="1.8"/><path d="M2.5 6.5 V20 Q2.5 21.5 4 21.5 H13.5" fill="none" stroke="#fbfbfe" stroke-width="1.8"/></svg>
<svg class="r" style="left:2385.00px;top:1324.00px;" width="130" height="130" viewBox="0 0 130 130"><circle cx="65" cy="65" r="64" fill="#87a9f8"/><g transform="translate(29 29) scale(3)"><path d="M16 2H3c-.55 0-1 .45-1 1v14l4-4h10c.55 0 1-.45 1-1V3c0-.55-.45-1-1-1zM15 4v7H4V4z" fill="#1a1b28" fill-rule="evenodd"/><path d="M21 6h-2v9H6v2c0 .55.45 1 1 1h11l4 4V7c0-.55-.45-1-1-1z" fill="#1a1b28"/></g></svg>
<div class="r" style="left:1.00px;top:215.00px;width:2546.00px;height:100.00px;background:#2e3a59;border-radius:0px;"></div>
<svg class="r" style="left:0.00px;top:215.00px;" width="100" height="100" viewBox="0 0 100 100"><path d="M14.9 231 H91.1 V299 H14.9 L49.2 265.3 Z M32 238 H83.2 V291.6 H32 L59 265.3 Z" fill="#87a9f8" fill-rule="evenodd" transform="translate(0 -215)"/></svg>
<div class="r" style="left:111.00px;top:235.00px;width:1786.00px;height:60.00px;background:#222a41;border-radius:10px;"></div>
<svg class="r" style="left:148.00px;top:255.00px;" width="28" height="28" viewBox="0 0 28 28"><circle cx="11.5" cy="11.5" r="7.6" fill="none" stroke="#fbfbfe" stroke-width="1.8"/><path d="M17 17 L23.8 23.8" stroke="#fbfbfe" stroke-width="1.8"/></svg>
<div class="t" style="left:212.25px;top:254.02px;font-size:25.37px;line-height:25.37px;font-weight:400;transform:scaleX(0.9308);-webkit-text-stroke-width:0.35px;letter-spacing:0.90px;color:#fbfbfe">c34601c5da3501f6ee0efce18de7e6145153ecfac2ce2019ec52e1535a4b3193</div>
<div class="r" style="left:1920.50px;top:241.00px;width:2.00px;height:48.00px;background:#5a6a92;border-radius:0px;"></div>
<div class="r" style="left:2223.00px;top:241.00px;width:2.00px;height:48.00px;background:#5a6a92;border-radius:0px;"></div>
<svg class="r" style="left:1940.00px;top:240.00px;" width="80" height="50" viewBox="1940 240 80 50"><path d="M1961.2 261 L1968 253.5 L1974.8 261 M1968 254 V271.5" fill="none" stroke="#cdd8ef" stroke-width="2.3"/><path d="M1956 270 V275 Q1956 277.6 1958.6 277.6 H1977.4 Q1980 277.6 1980 275 V270" fill="none" stroke="#cdd8ef" stroke-width="2.3"/></svg>
<svg class="r" style="left:2010.00px;top:240.00px;" width="60" height="50" viewBox="2010 240 60 50"><path d="M2043.5 249.7 H2023.9 Q2023 249.7 2023 250.6 V278" fill="none" stroke="#cdd8ef" stroke-width="2.3"/><path d="M2053 262 V272.3 Q2053 273.6 2051.7 273.6 H2027.8 L2023 278" fill="none" stroke="#cdd8ef" stroke-width="2.3" stroke-linejoin="round"/><circle cx="2055" cy="251" r="7" fill="#fd5a4e"/></svg>
<svg class="r" style="left:2090.00px;top:246.00px;" width="36" height="36" viewBox="0 0 36 36"><circle cx="18" cy="18" r="15.2" fill="none" stroke="#cdd8ef" stroke-width="2.4"/><path d="M13.7 14.6 Q13.7 10.3 18 10.3 Q22.5 10.3 22.5 14.3 Q22.5 16.8 20 18.3 Q18 19.5 18 22.3" fill="none" stroke="#cdd8ef" stroke-width="2.3"/><circle cx="18" cy="26.9" r="1.5" fill="#cdd8ef"/></svg>
<svg class="r" style="left:2158.00px;top:245.00px;" width="40" height="40" viewBox="0 0 40 40"><circle cx="20" cy="20" r="7.3" fill="none" stroke="#cdd8ef" stroke-width="2.4"/><path d="M32.50 20.00 L39.30 20.00" stroke="#cdd8ef" stroke-width="2.4"/><path d="M28.84 28.84 L32.37 32.37" stroke="#cdd8ef" stroke-width="2.4"/><path d="M20.00 32.50 L20.00 39.30" stroke="#cdd8ef" stroke-width="2.4"/><path d="M11.16 28.84 L7.63 32.37" stroke="#cdd8ef" stroke-width="2.4"/><path d="M7.50 20.00 L0.70 20.00" stroke="#cdd8ef" stroke-width="2.4"/><path d="M11.16 11.16 L7.63 7.63" stroke="#cdd8ef" stroke-width="2.4"/><path d="M20.00 7.50 L20.00 0.70" stroke="#cdd8ef" stroke-width="2.4"/><path d="M28.84 11.16 L32.37 7.63" stroke="#cdd8ef" stroke-width="2.4"/></svg>
<div class="t" style="left:2282.22px;top:252.74px;font-size:25.81px;line-height:25.81px;font-weight:400;transform:scaleX(0.9034);-webkit-text-stroke-width:0.60px;letter-spacing:0.90px;color:#fbfbfe">Sign in</div>
<div class="r" style="left:2402.00px;top:240.50px;width:126.00px;height:48.50px;background:#87a9f8;border-radius:24px;"></div>
<div class="t" style="left:2421.42px;top:252.74px;font-size:25.81px;line-height:25.81px;font-weight:400;transform:scaleX(0.9339);-webkit-text-stroke-width:0.60px;letter-spacing:0.90px;color:#15192a">Sign up</div>
</body></html>
